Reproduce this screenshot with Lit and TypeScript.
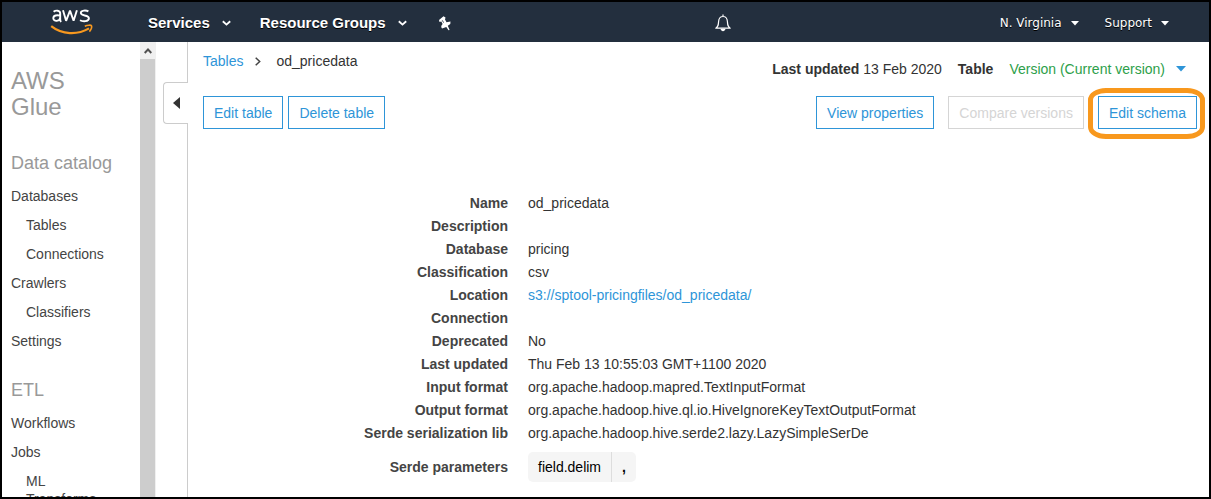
import { LitElement, html, css, svg, nothing } from "lit";
import { customElement } from "lit/decorators.js";
import { classMap } from "lit/directives/class-map.js";

interface NavItem {
  label: string;
  nested?: boolean;
}

interface NavGroup {
  title: string;
  items: NavItem[];
}

interface Detail {
  label: string;
  value?: string;
  link?: boolean;
}

const NAV: NavGroup[] = [
  {
    title: "Data catalog",
    items: [
      { label: "Databases" },
      { label: "Tables", nested: true },
      { label: "Connections", nested: true },
      { label: "Crawlers" },
      { label: "Classifiers", nested: true },
      { label: "Settings" },
    ],
  },
  {
    title: "ETL",
    items: [
      { label: "Workflows" },
      { label: "Jobs" },
      { label: "ML Transforms", nested: true },
    ],
  },
];

const DETAILS: Detail[] = [
  { label: "Name", value: "od_pricedata" },
  { label: "Description" },
  { label: "Database", value: "pricing" },
  { label: "Classification", value: "csv" },
  { label: "Location", value: "s3://sptool-pricingfiles/od_pricedata/", link: true },
  { label: "Connection" },
  { label: "Deprecated", value: "No" },
  { label: "Last updated", value: "Thu Feb 13 10:55:03 GMT+1100 2020" },
  { label: "Input format", value: "org.apache.hadoop.mapred.TextInputFormat" },
  { label: "Output format", value: "org.apache.hadoop.hive.ql.io.HiveIgnoreKeyTextOutputFormat" },
  { label: "Serde serialization lib", value: "org.apache.hadoop.hive.serde2.lazy.LazySimpleSerDe" },
];

const chevron = svg`<path d="M.8 1.300 4.500 4.600 8.200 1.300" fill="none" stroke="currentColor" stroke-width="1.900"/>`;

@customElement("console-header")
export class ConsoleHeader extends LitElement {
  static styles = css`
    :host {
      display: flex;
      align-items: center;
      box-sizing: border-box;
      height: 40px;
      padding: 2px 40px 0 48px;
      background: #232f3e;
      color: #fff;
      font-family: "Liberation Sans", Arial, sans-serif;
    }
    svg {
      display: block;
      flex: none;
    }
    .logo {
      display: block;
      margin-right: 54px;
    }
    button {
      display: flex;
      align-items: center;
      padding: 0;
      border: 0;
      background: none;
      color: inherit;
      font: inherit;
      white-space: nowrap;
      cursor: pointer;
      text-shadow: 0 1px 0 #000;
    }
    .menu {
      gap: 12px;
      margin-right: 29px;
      font-size: 15px;
      font-weight: bold;
      line-height: 20px;
    }
    .pin {
      margin-left: 3px;
    }
    .right {
      display: flex;
      align-items: center;
      gap: 26px;
      margin-left: auto;
      font-family: "DejaVu Sans", Verdana, sans-serif;
      font-size: 12px;
      line-height: 20px;
    }
    .right button {
      gap: 9px;
    }
    .right .bell {
      margin-right: 243px;
    }
  `;

  render() {
    return html`
      <a class="logo" href="#" aria-label="AWS">
        <svg width="44" height="30" viewBox="0 0 44 30" fill="none">
          <g stroke="#fff" stroke-width="1.900">
            <path d="M3.600 3.700C5.500 2.200 10.200 1.900 10.200 5.600V11.200C10.200 12.500 10.500 13.200 11 14M10.200 7.600C7 6.800 3.300 7.200 3.300 10.300 3.300 14 10.200 13.600 10.200 9.500" />
            <path d="M13 2.200 16.100 12.800 20 2.600 23.600 12.800 26.900 2.200" stroke-linejoin="bevel" />
            <path d="M38.400 3.400C36.200 2.100 30.800 2 30.800 5.100 30.800 8.400 38.900 6.600 38.900 10.300 38.900 13.900 32.600 13.700 30 12.200" />
          </g>
          <path d="M1.200 18.200C12 26.800 27.500 27.200 39 20.400" stroke="#f7981f" stroke-width="2.200" />
          <path d="M34.800 18.200C37.500 17 41 16.800 41.500 17.800 41.900 19 41 21.800 39.400 23.600" stroke="#f7981f" stroke-width="1.600" />
        </svg>
      </a>
      <button class="menu">Services
        <svg width="9" height="6" viewBox="0 0 9 6">${chevron}</svg>
      </button>
      <button class="menu">Resource Groups
        <svg width="9" height="6" viewBox="0 0 9 6">${chevron}</svg>
      </button>
      <button class="pin" aria-label="Pin shortcuts">
        <svg width="12" height="15" viewBox="0 0 12 15">
          <path d="M0 4 4.500 .3 6.500 1.500 6 3.500 7.500 6.300 11.500 5.500 11.300 8 8.800 9.800 10.600 14 9.500 14.300 7.300 11 3 12.400 2.200 11 2.500 9.500 3.600 8 2.300 5.500 .5 6Z" fill="#fff" />
          <path d="M3.300 4.300 4.600 6.700" stroke="#232f3e" stroke-width=".8" />
        </svg>
      </button>
      <div class="right">
        <button class="bell" aria-label="Notifications">
          <svg width="16" height="18" viewBox="0 0 16 18" fill="none" stroke="#fff" stroke-width="1.200">
            <path d="M8 .5V2.500M.8 14.200C3.300 12.500 3.400 11 3.600 7.500 3.800 4.300 5.500 2.500 8 2.500S12.200 4.300 12.400 7.500C12.600 11 12.700 12.500 15.200 14.200Z" stroke-linejoin="round" />
            <path d="M5.500 14.800H10.500C10 17.900 6 17.900 5.500 14.800Z" fill="#fff" stroke="none" />
          </svg>
        </button>
        <button>N. Virginia
          <svg width="8" height="5" viewBox="0 0 8 5"><path d="M0 0H8L4 4.500Z" fill="#fff" /></svg>
        </button>
        <button>Support
          <svg width="8" height="5" viewBox="0 0 8 5"><path d="M0 0H8L4 4.500Z" fill="#fff" /></svg>
        </button>
      </div>
    `;
  }
}

@customElement("console-sidebar")
export class ConsoleSidebar extends LitElement {
  static styles = css`
    :host {
      display: flex;
      flex: none;
      width: 154px;
      overflow: hidden;
      color: #444;
      font-size: 14px;
      line-height: 18px;
    }
    nav {
      flex: 1;
      padding: 26px 26px 0 9px;
    }
    h1,
    h2 {
      margin: 0;
      color: #999;
      font-weight: normal;
    }
    h1 {
      font-size: 24px;
      line-height: 26px;
    }
    h2 {
      margin: 32px 0 13px;
      font-size: 18px;
      line-height: 22px;
    }
    ul + h2 {
      margin-top: 29px;
    }
    ul {
      display: flex;
      flex-direction: column;
      gap: 11px;
      margin: 0;
      padding: 0;
      list-style: none;
    }
    .nested {
      padding-left: 15px;
    }
    a {
      color: inherit;
      text-decoration: none;
    }
    .track {
      flex: none;
      box-sizing: border-box;
      width: 16px;
      border-right: 1px solid #f0f0f0;
      background: #cdcdcd;
    }
    .up {
      display: flex;
      align-items: center;
      justify-content: center;
      width: 15px;
      height: 17px;
      padding: 0;
      border: 0;
      background: #f0f0f0;
      color: #505050;
    }
  `;

  render() {
    return html`
      <nav>
        <h1>AWS Glue</h1>
        ${NAV.map(
          (group) => html`
            <h2>${group.title}</h2>
            <ul>
              ${group.items.map(
                (item) => html`
                  <li class=${classMap({ nested: !!item.nested })}><a href="#">${item.label}</a></li>
                `
              )}
            </ul>
          `
        )}
      </nav>
      <div class="track">
        <button class="up" aria-label="Scroll up">
          <svg width="8" height="6" viewBox="0 0 8 6">
            <path d="M.7 5 4 1.500 7.300 5" fill="none" stroke="currentColor" stroke-width="1.900" />
          </svg>
        </button>
      </div>
    `;
  }
}

@customElement("table-details")
export class TableDetails extends LitElement {
  static styles = css`
    :host {
      display: block;
      color: #333;
      font-size: 14px;
      line-height: 23px;
    }
    dl {
      display: grid;
      grid-template-columns: 305px 1fr;
      column-gap: 20px;
      grid-auto-rows: minmax(23px, auto);
      margin: 0;
    }
    dt {
      color: #444;
      font-weight: bold;
      text-align: right;
    }
    dd {
      margin: 0;
    }
    a {
      color: #2e95d8;
      text-decoration: none;
    }
    .params {
      padding-top: 7px;
      line-height: 30px;
    }
    .chip {
      display: inline-flex;
      border-radius: 5px;
      background: #f5f5f5;
      color: #000;
    }
    .key {
      padding: 0 10px;
      border-right: 1px solid #ddd;
    }
    .value {
      padding: 0 10px;
      font-weight: bold;
    }
  `;

  render() {
    return html`
      <dl>
        ${DETAILS.map(
          (d) => html`
            <dt>${d.label}</dt>
            <dd>${d.link ? html`<a href="#">${d.value}</a>` : d.value ?? nothing}</dd>
          `
        )}
        <dt class="params">Serde parameters</dt>
        <dd class="params">
          <span class="chip"><span class="key">field.delim</span><span class="value">,</span></span>
        </dd>
      </dl>
    `;
  }
}

@customElement("app-root")
export class AppRoot extends LitElement {
  static styles = css`
    :host {
      display: flex;
      flex-direction: column;
      box-sizing: border-box;
      height: 100vh;
      border: 2px solid #000;
      overflow: hidden;
      background: #fff;
      color: #333;
      font-family: "Liberation Sans", Arial, sans-serif;
      font-size: 14px;
      line-height: 20px;
    }
    console-header {
      flex: none;
    }
    .body {
      display: flex;
      flex: 1;
      min-height: 0;
    }
    .gutter {
      flex: none;
      width: 32px;
      box-sizing: border-box;
      padding: 40px 0 0 7px;
      border-right: 1px solid #ccc;
    }
    .collapse {
      display: flex;
      align-items: center;
      box-sizing: border-box;
      width: 25px;
      height: 42px;
      padding: 0 0 0 9px;
      border: 1px solid #ccc;
      border-right: 0;
      border-radius: 4px 0 0 4px;
      background: #fff;
      margin-right: -1px;
    }
    main {
      flex: 1;
      min-width: 0;
      padding: 9px 12px 0 15px;
    }
    .top,
    .actions,
    .crumbs,
    .meta {
      display: flex;
    }
    .top {
      justify-content: space-between;
    }
    .crumbs {
      align-items: center;
      height: 20px;
    }
    .crumbs svg {
      margin: 0 15px 0 12px;
    }
    .meta {
      align-items: center;
      gap: 16px;
      padding: 8px 11px 0 0;
    }
    .version {
      display: flex;
      align-items: center;
      gap: 11px;
      padding: 0;
      border: 0;
      background: none;
      color: #2da04a;
      font: inherit;
    }
    a {
      color: #2e95d8;
      text-decoration: none;
    }
    .actions {
      gap: 5px;
      margin-top: 17px;
    }
    .right {
      display: flex;
      gap: 14px;
      margin-left: auto;
    }
    .btn {
      height: 33px;
      padding: 0 10px;
      border: 1px solid #2e95d8;
      background: #fff;
      color: #2e95d8;
      font: inherit;
      white-space: nowrap;
    }
    .btn:disabled {
      border-color: #d5d5d5;
      color: #d5d5d5;
    }
    .marked {
      position: relative;
    }
    .marked::after {
      content: "";
      position: absolute;
      inset: -8px -8px -10px -10px;
      border: 5px solid #f8981d;
      border-radius: 18px / 12px;
      pointer-events: none;
    }
    table-details {
      margin-top: 63px;
    }
  `;

  render() {
    return html`
      <console-header></console-header>
      <div class="body">
        <console-sidebar></console-sidebar>
        <div class="gutter">
          <button class="collapse" aria-label="Collapse navigation">
            <svg width="7" height="12" viewBox="0 0 7 12"><path d="M7 0V12L0 6Z" fill="#333" /></svg>
          </button>
        </div>
        <main>
          <div class="top">
            <div class="crumbs">
              <a href="#">Tables</a>
              <svg width="6" height="9" viewBox="0 0 6 9">
                <path d="M.7 .7 4.700 4.500 .7 8.300" fill="none" stroke="#444" stroke-width="1.500" />
              </svg>
              <span>od_pricedata</span>
            </div>
            <div class="meta">
              <span><b>Last updated</b> 13 Feb 2020</span>
              <b>Table</b>
              <button class="version">Version (Current version)
                <svg width="10" height="6" viewBox="0 0 10 6"><path d="M0 0H10L5 5.500Z" fill="#2e95d8" /></svg>
              </button>
            </div>
          </div>
          <div class="actions">
            <button class="btn">Edit table</button>
            <button class="btn">Delete table</button>
            <div class="right">
              <button class="btn">View properties</button>
              <button class="btn" disabled>Compare versions</button>
              <span class="marked"><button class="btn">Edit schema</button></span>
            </div>
          </div>
          <table-details></table-details>
        </main>
      </div>
    `;
  }
}
